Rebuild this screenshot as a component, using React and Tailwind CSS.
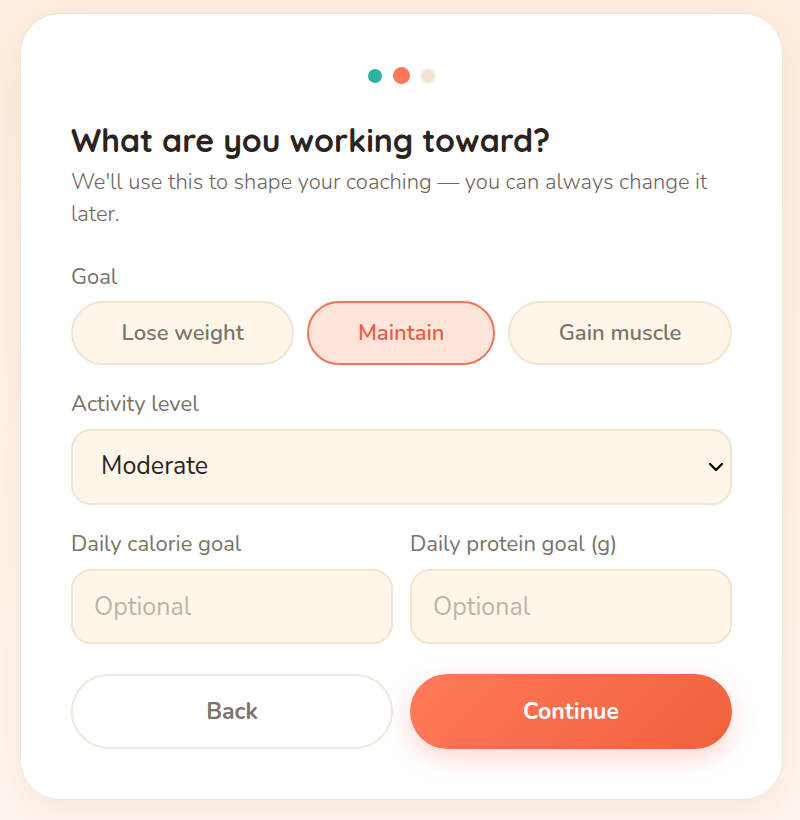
import { useState } from 'react';
import { ChevronDown } from 'lucide-react';

const GOALS = ['Lose weight', 'Maintain', 'Gain muscle'];
const ACTIVITY_LEVELS = ['Sedentary', 'Light', 'Moderate', 'Active', 'Very active'];

const labelClass = 'block text-[22px] leading-8 text-[#7a7268]';
const fieldClass =
  'w-full rounded-[20px] border-2 border-[#f0e4d3] bg-[#fff6ea] outline-none';

function StepDots() {
  return (
    <div className="flex h-[17px] items-center justify-center gap-[11px]">
      <span className="size-[14px] rounded-full bg-[#2bb39b]" />
      <span className="size-[17px] rounded-full bg-[#ff7656]" />
      <span className="size-[14px] rounded-full bg-[#f3e2d0]" />
    </div>
  );
}

function NumberField({ id, label, value, onChange }) {
  return (
    <div>
      <label htmlFor={id} className={labelClass}>
        {label}
      </label>
      <input
        id={id}
        type="text"
        inputMode="numeric"
        placeholder="Optional"
        value={value}
        onChange={(e) => onChange(e.target.value)}
        className={`${fieldClass} mt-[9px] h-[75px] px-[21px] text-[25px] text-[#2b2320] placeholder:text-[#bfb3a6]`}
      />
    </div>
  );
}

export default function App() {
  const [goal, setGoal] = useState('Maintain');
  const [activity, setActivity] = useState('Moderate');
  const [calories, setCalories] = useState('');
  const [protein, setProtein] = useState('');

  return (
    <main className="min-h-screen bg-linear-to-b from-[#ffeedf] to-[#fff5ed] pt-[13px] pr-[17px] pb-5 pl-5 font-['Nunito','Lato',sans-serif]">
      <form
        onSubmit={(e) => e.preventDefault()}
        className="rounded-[40px] border border-[#f1e6d6] bg-white px-[50px] pt-[53px] pb-[50px] shadow-[0_12px_40px_rgba(120,80,40,0.08)]"
      >
        <StepDots />

        <h1 className="mt-9 font-['Quicksand','Lato',sans-serif] text-[32px] leading-10 font-bold text-[#2b2320]">
          What are you working toward?
        </h1>
        <p className="mt-[6px] text-[22px] leading-8 font-light text-[#6f675d]">
          We'll use this to shape your coaching — you can always change it later.
        </p>

        <fieldset className="mt-[31px]">
          <legend className={labelClass}>Goal</legend>
          <div className="mt-2 flex gap-[13px]">
            {GOALS.map((item) => (
              <button
                key={item}
                type="button"
                aria-pressed={goal === item}
                onClick={() => setGoal(item)}
                className={`h-16 flex-auto rounded-full border-2 text-[22px] font-semibold ${
                  goal === item
                    ? 'border-[#f0735a] bg-[#ffe4da] text-[#ea5f43]'
                    : 'border-[#f0e4d3] bg-[#fff6ea] text-[#7d756b]'
                }`}
              >
                <span className="px-8">{item}</span>
              </button>
            ))}
          </div>
        </fieldset>

        <div className="mt-[23px]">
          <label htmlFor="activity" className={labelClass}>
            Activity level
          </label>
          <div className="relative mt-[9px]">
            <select
              id="activity"
              value={activity}
              onChange={(e) => setActivity(e.target.value)}
              className={`${fieldClass} h-[76px] appearance-none px-7 text-[25px] text-[#2b2320]`}
            >
              {ACTIVITY_LEVELS.map((level) => (
                <option key={level}>{level}</option>
              ))}
            </select>
            <ChevronDown
              className="pointer-events-none absolute top-1/2 right-1 size-6 -translate-y-1/2 text-black"
              strokeWidth={2.25}
            />
          </div>
        </div>

        <div className="mt-[23px] grid grid-cols-2 gap-[17px]">
          <NumberField
            id="calories"
            label="Daily calorie goal"
            value={calories}
            onChange={setCalories}
          />
          <NumberField
            id="protein"
            label="Daily protein goal (g)"
            value={protein}
            onChange={setProtein}
          />
        </div>

        <div className="mt-[30px] grid grid-cols-2 gap-[17px] text-[23px] font-bold">
          <button
            type="button"
            className="h-[75px] rounded-full border-2 border-[#f0e8dc] bg-white pt-0.5 text-[#7d756b]"
          >
            Back
          </button>
          <button
            type="submit"
            className="h-[75px] rounded-full bg-linear-135 from-[#ff7a59] to-[#f0603c] pt-0.5 text-white shadow-[0_8px_24px_rgba(255,100,80,0.28)]"
          >
            Continue
          </button>
        </div>
      </form>
    </main>
  );
}
